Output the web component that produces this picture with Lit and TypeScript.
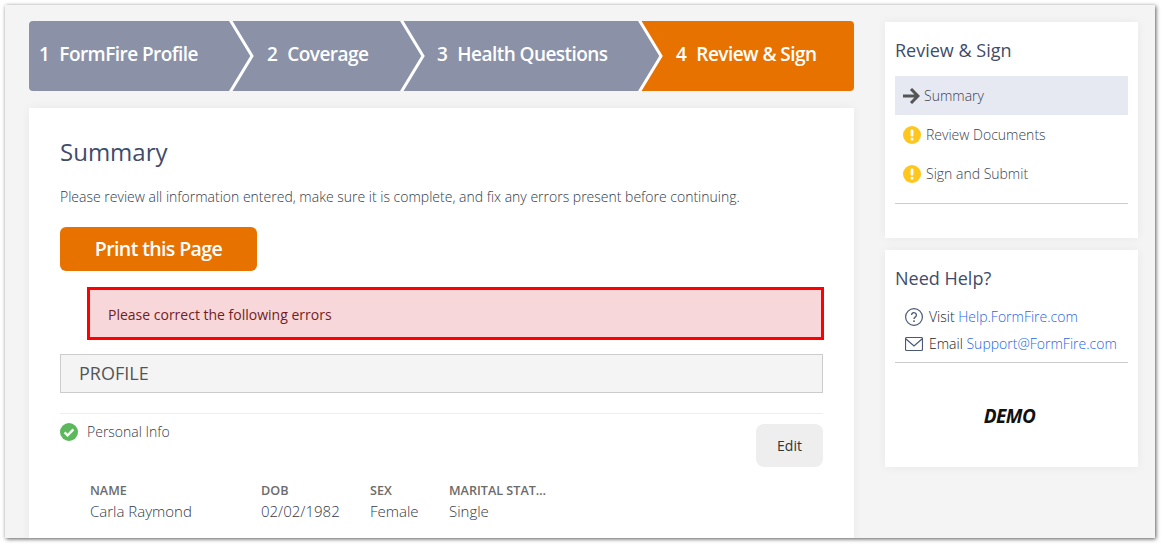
import { LitElement, html, css, svg } from "lit";
import { customElement } from "lit/decorators.js";

const STEPS = [
  { n: 1, label: "FormFire Profile", cls: "s1" },
  { n: 2, label: "Coverage", cls: "s2" },
  { n: 3, label: "Health Questions", cls: "s3" },
  { n: 4, label: "Review & Sign", cls: "s4" },
];

const warn = html`<svg class="ic18" viewBox="0 0 18 18"><circle cx="9" cy="9" r="9" fill="#ffc61e"/><rect x="7.6" y="3.6" width="2.8" height="7" rx="1" fill="#fff"/><rect x="7.6" y="11.8" width="2.8" height="2.8" rx="1" fill="#fff"/></svg>`;

@customElement("app-root")
export class AppRoot extends LitElement {
  static styles = css`
    :host { display: block; width: 1164px; height: 547px; background: #fff; font-family: "Open Sans", sans-serif; color: #4a4f5c; overflow: hidden; }
    * { box-sizing: border-box; }
    .frame { margin: 5px 0 0 5px; width: 1150px; height: 533px; background: #f4f4f4; box-shadow: 1px 1px 4px rgba(0,0,0,.65); display: flex; gap: 31px; padding: 16px 0 0 24px; overflow: hidden; }
    .main { width: 825px; flex: none; }
    .stepper { display: grid; grid-template-columns: 201px 171px 238px 215px; height: 70px; border-radius: 4px; overflow: hidden; }
    .step { position: relative; display: flex; align-items: center; padding-bottom: 4px; background: #8b92a8; color: #fff; font-size: 19px; font-weight: 600; letter-spacing: -.55px; }
    .step .num { margin-right: 10px; }
    .s1 { padding-left: 10px; z-index: 3; }
    .s2 { padding-left: 37px; z-index: 2; }
    .s3 { padding-left: 36px; z-index: 1; }
    .s4 { padding-left: 37px; background: #e87200; }
    .chev { position: absolute; left: 100%; top: 0; width: 26px; height: 70px; margin-left: -1px; }
    .card { background: #fff; box-shadow: 0 0 10px rgba(0,0,0,.05); }
    .content { margin-top: 17px; height: 440px; padding: 27px 31px 0; overflow: hidden; }
    h1 { margin: 0; font-size: 24px; line-height: 34px; font-weight: 400; color: #3f4c6b; }
    .intro { margin: 18px 0 0; font-size: 14px; line-height: 20px; font-weight: 300; color: #333a48; }
    .print { display: flex; align-items: center; justify-content: center; margin-top: 20px; padding-bottom: 2px; width: 197px; height: 44px; background: #e87200; border-radius: 6px; color: #fff; font-size: 19.6px; font-weight: 600; letter-spacing: -.65px; }
    .alert { margin: 16px -1px 0 27px; height: 53px; border: 3px solid #f00; background: #f8d7da; color: #721c24; display: flex; align-items: center; padding: 1px 0 0 18px; font-size: 14px; }
    .section { margin-top: 14px; height: 39px; background: #f4f4f4; border: 1px solid #ccc; display: flex; align-items: center; padding: 0 0 1px 18px; font-size: 18px; color: #555; }
    .sub { margin-top: 20px; border-top: 1px solid #eee; display: flex; justify-content: space-between; padding-top: 9px; }
    .status { display: flex; align-items: flex-start; gap: 9px; font-size: 14px; line-height: 18px; font-weight: 300; color: #333a48; }
    .ic18 { width: 18px; height: 18px; flex: none; }
    .edit { width: 67px; height: 43px; margin-top: 1px; background: #eee; border-radius: 8px; display: flex; align-items: center; justify-content: center; font-size: 14px; color: #333; }
    .info { display: grid; grid-template-columns: 171px 109px 79px 100px; margin: 15px 0 0 30px; }
    .info b { display: block; font-size: 12.6px; line-height: 18px; font-weight: 600; color: #6b6b6b; white-space: nowrap; overflow: hidden; text-overflow: ellipsis; }
    .info span { display: block; font-size: 15px; line-height: 23px; font-weight: 300; color: #333a48; }
    .side { width: 253px; flex: none; padding-top: 1px; }
    .panel { padding: 0 10px; }
    .p1 { height: 216px; padding-top: 14px; }
    .p2 { height: 217px; margin-top: 12px; padding-top: 14px; }
    h2 { margin: 0; font-size: 18px; line-height: 28px; font-weight: 400; color: #3f4c6b; }
    .nav { margin-top: 12px; border-bottom: 1px solid #ccc; padding-bottom: 10px; }
    .nav div { height: 39px; display: flex; align-items: center; gap: 5px; padding-left: 8px; font-size: 14px; color: #3c414e; font-weight: 300; }
    .nav .on { background: #e6e9f2; padding-left: 7px; gap: 4px; }
    .arrow { width: 18px; height: 16px; flex: none; }
    .help { margin-top: 11px; border-bottom: 1px solid #ccc; padding: 0 0 5px 10px; }
    .help div { height: 27px; display: flex; align-items: center; gap: 6px; font-size: 14px; font-weight: 300; color: #222; white-space: nowrap; }
    .help a { color: #1f66e5; text-decoration: none; }
    .help svg { width: 18px; height: 18px; flex: none; }
    .demo { margin-top: 41px; padding-right: 4px; text-align: center; font-size: 19px; line-height: 24px; font-weight: 700; font-style: italic; color: #111; letter-spacing: -.5px; }
  `;

  render() {
    return html`<div class="frame">
      <div class="main">
        <div class="stepper">
          ${STEPS.map((s, i) => html`<div class="step ${s.cls}">
            <span class="num">${s.n}</span><span>${s.label}</span>
            ${i < 3 ? html`<svg class="chev" viewBox="0 0 26 70">${svg`<polygon points="0,0 1,0 23,35 1,70 0,70" fill="#8b92a8"/><polyline points="0,-3 23,35 0,73" fill="none" stroke="#fff" stroke-width="3"/>`}</svg>` : ""}
          </div>`)}
        </div>
        <div class="card content">
          <h1>Summary</h1>
          <p class="intro">Please review all information entered, make sure it is complete, and fix any errors present before continuing.</p>
          <div class="print">Print this Page</div>
          <div class="alert">Please correct the following errors</div>
          <div class="section">PROFILE</div>
          <div class="sub">
            <div class="status">
              <svg class="ic18" viewBox="0 0 18 18"><circle cx="9" cy="9" r="9" fill="#5cb85c"/><path d="M4.6 9.4l3 3 5.8-6" fill="none" stroke="#fff" stroke-width="2.4"/></svg>
              Personal Info
            </div>
            <div class="edit">Edit</div>
          </div>
          <div class="info">
            <div><b>NAME</b><span>Carla Raymond</span></div>
            <div><b>DOB</b><span>02/02/1982</span></div>
            <div><b>SEX</b><span>Female</span></div>
            <div><b>MARITAL STATUS</b><span>Single</span></div>
          </div>
        </div>
      </div>
      <div class="side">
        <div class="card panel p1">
          <h2>Review &amp; Sign</h2>
          <div class="nav">
            <div class="on"><svg class="arrow" viewBox="0 0 18 16"><path d="M1 8h15M9 1l7 7-7 7" fill="none" stroke="#555" stroke-width="3"/></svg>Summary</div>
            <div>${warn}Review Documents</div>
            <div>${warn}Sign and Submit</div>
          </div>
        </div>
        <div class="card panel p2">
          <h2>Need Help?</h2>
          <div class="help">
            <div><svg viewBox="0 0 18 18"><circle cx="9" cy="9" r="8.4" fill="none" stroke="#4a5875" stroke-width="1.2"/><path d="M6.6 7a2.4 2.4 0 1 1 3.6 2.1c-.8.5-1.2 1-1.2 1.9" fill="none" stroke="#4a5875" stroke-width="1.3"/><circle cx="9" cy="13.2" r=".9" fill="#4a5875"/></svg><span>Visit <a>Help.FormFire.com</a></span></div>
            <div><svg viewBox="0 0 18 18"><rect x=".5" y="2.5" width="17" height="13" rx="1.2" fill="none" stroke="#4a5875" stroke-width="1.2"/><path d="M1 4l8 7 8-7" fill="none" stroke="#4a5875" stroke-width="1.2"/></svg><span>Email <a>Support@FormFire.com</a></span></div>
          </div>
          <div class="demo">DEMO</div>
        </div>
      </div>
    </div>`;
  }
}
